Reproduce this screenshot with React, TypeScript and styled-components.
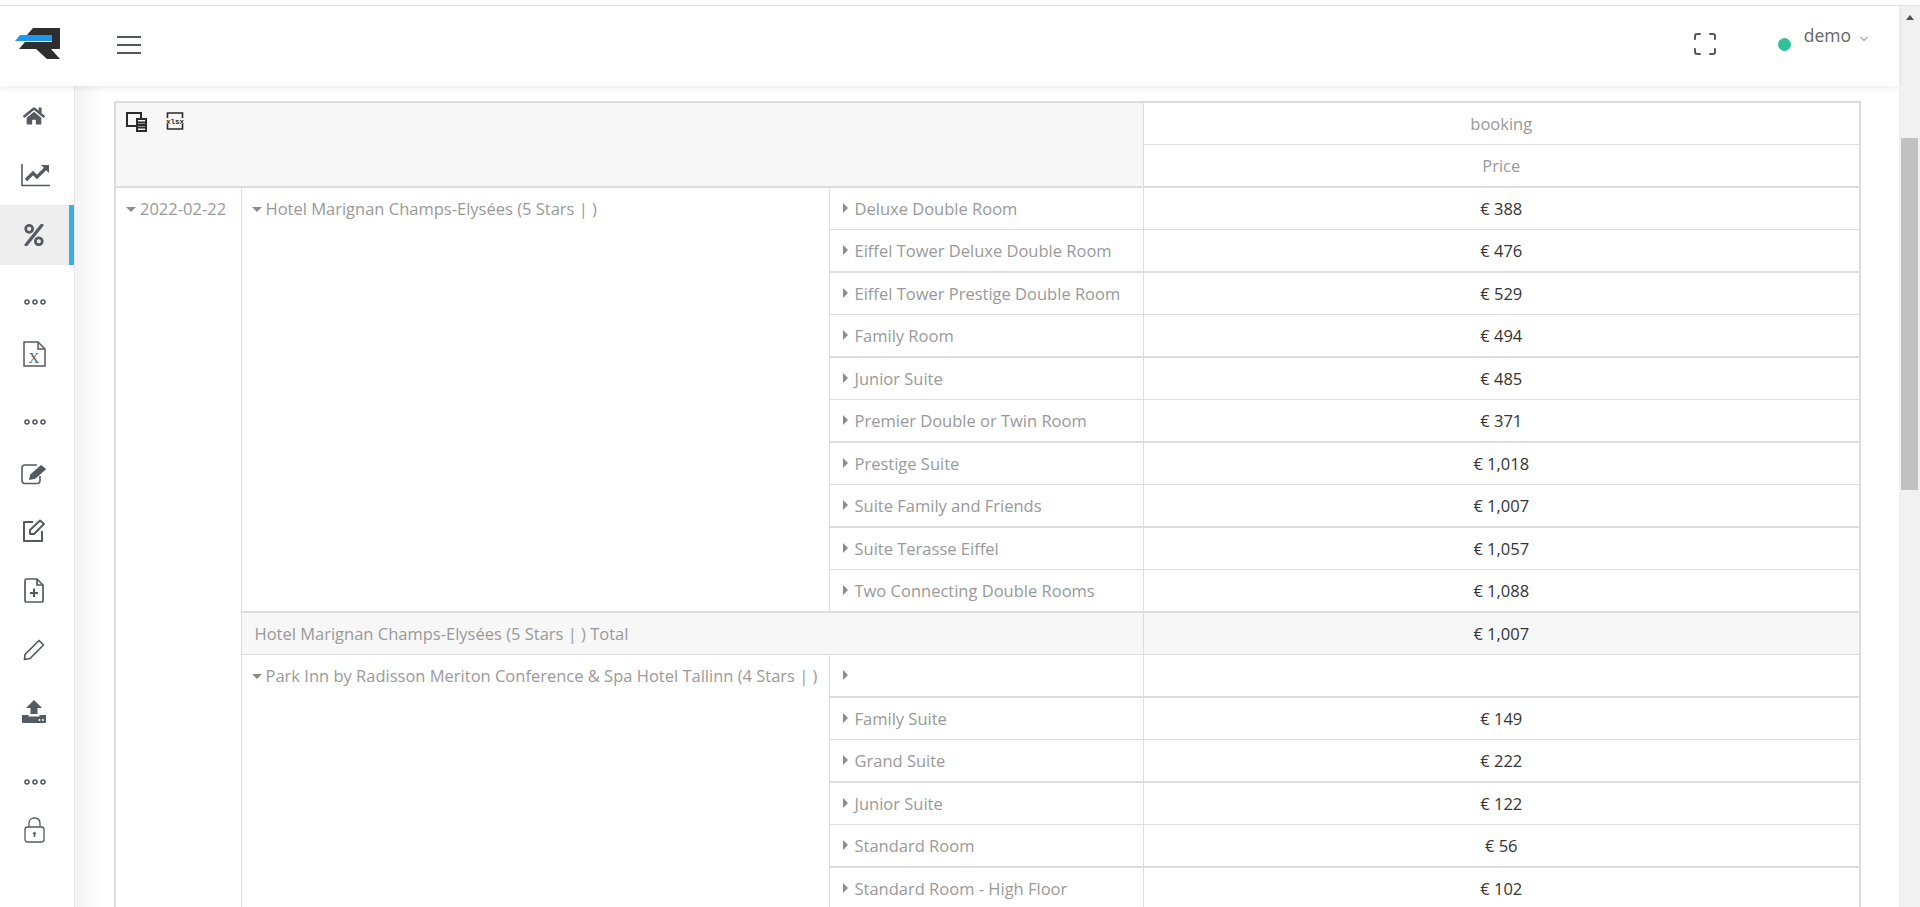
import React from 'react';
import styled, { createGlobalStyle } from 'styled-components';
import { FaHome, FaPercent } from 'react-icons/fa';

const GlobalStyle = createGlobalStyle`
	html, body {
		margin: 0;
		padding: 0;
		height: 100%;
		overflow: hidden;
		background: #fff;
		font-family: 'Open Sans', 'Liberation Sans', sans-serif;
	}
`;

type Row = { room: string; price: string };

const marignan: Row[] = [
	{ room: 'Deluxe Double Room', price: '€ 388' },
	{ room: 'Eiffel Tower Deluxe Double Room', price: '€ 476' },
	{ room: 'Eiffel Tower Prestige Double Room', price: '€ 529' },
	{ room: 'Family Room', price: '€ 494' },
	{ room: 'Junior Suite', price: '€ 485' },
	{ room: 'Premier Double or Twin Room', price: '€ 371' },
	{ room: 'Prestige Suite', price: '€ 1,018' },
	{ room: 'Suite Family and Friends', price: '€ 1,007' },
	{ room: 'Suite Terasse Eiffel', price: '€ 1,057' },
	{ room: 'Two Connecting Double Rooms', price: '€ 1,088' },
];

const parkInn: Row[] = [
	{ room: '', price: '' },
	{ room: 'Family Suite', price: '€ 149' },
	{ room: 'Grand Suite', price: '€ 222' },
	{ room: 'Junior Suite', price: '€ 122' },
	{ room: 'Standard Room', price: '€ 56' },
	{ room: 'Standard Room - High Floor', price: '€ 102' },
];

const Dots = () => (
	<svg width="22" height="6" viewBox="0 0 22 6" fill="none" stroke="#555a60" strokeWidth="1.6">
		<circle cx="3" cy="3" r="2" />
		<circle cx="11" cy="3" r="2" />
		<circle cx="19" cy="3" r="2" />
	</svg>
);

const Logo = () => (
	<svg width="45" height="31" viewBox="0 0 45 31">
		<path d="M18 0H45V21H36L45 31H32L21 21H4L10 14H37V7H12Z" fill="#2e2e2e" />
		<path d="M5 7H37V13H0Z" fill="#1f96f0" />
	</svg>
);

const ChartIcon = () => (
	<svg width="30" height="24" viewBox="0 0 30 24" fill="none">
		<path d="M1 1V22.500H29" stroke="#555a60" strokeWidth="1.6" />
		<path d="M5 17L12 10L16 14L25 5" stroke="#555a60" strokeWidth="3.2" />
		<path d="M20 2H28V10Z" fill="#555a60" />
	</svg>
);

const ExcelIcon = () => (
	<svg width="23" height="26" viewBox="0 0 23 26" fill="none" stroke="#555a60" strokeWidth="1.5">
		<path d="M1 1H15L22 8V25H1Z" />
		<path d="M15 1V8H22" />
		<text x="11" y="22" fontSize="15" fontFamily="Liberation Serif, serif" textAnchor="middle" stroke="none" fill="#555a60">
			X
		</text>
	</svg>
);

const WriteIcon = () => (
	<svg width="26" height="21" viewBox="0 0 26 21" fill="none" stroke="#555a60" strokeWidth="1.6">
		<path d="M16 1H4Q1 1 1 4V16Q1 19.500 4 19.500H16Q19 19.500 19 16V12" />
		<path d="M9 15L10 11L20 2L24 5L14 14Z" fill="#555a60" />
	</svg>
);

const EditIcon = () => (
	<svg width="24" height="24" viewBox="0 0 24 24" fill="none" stroke="#555a60" strokeWidth="2">
		<path d="M11 3H2V22H20V12" strokeLinejoin="round" />
		<path d="M8 15V11L18 1.500L22 5L12 15Z" strokeLinejoin="round" />
	</svg>
);

const NewFileIcon = () => (
	<svg width="20" height="25" viewBox="0 0 20 25" fill="none" stroke="#555a60" strokeWidth="1.7">
		<path d="M2.500 1H13L19 7V23Q19 24 18 24H2.500Q1 24 1 23V2.500Q1 1 2.500 1Z" />
		<path d="M13 1V7H19" />
		<path d="M10 10.500V19M6 15H14" strokeWidth="2" />
	</svg>
);

const PencilIcon = () => (
	<svg width="22" height="22" viewBox="0 0 22 22" fill="none" stroke="#555a60" strokeWidth="1.7">
		<path d="M16 1.500L20.500 6L7 19.500L1.500 20.500L2 15.500Z" strokeLinejoin="round" />
	</svg>
);

const UploadIcon = () => (
	<svg width="24" height="23" viewBox="0 0 24 23">
		<path d="M12 0L20 8H15.500V14H8.500V8H4Z" fill="#555a60" />
		<path d="M0 15H6.500V16.500H17.500V15H24V22Q24 23 23 23H1Q0 23 0 22Z" fill="#555a60" />
		<circle cx="17.500" cy="20" r="1" fill="#fff" />
		<circle cx="21" cy="20" r="1" fill="#fff" />
	</svg>
);

const LockIcon = () => (
	<svg width="21" height="26" viewBox="0 0 21 26" fill="none" stroke="#555a60" strokeWidth="1.3">
		<path d="M5 10V6.500Q5 1 10.500 1T16 6.500V10" />
		<rect x="1" y="10" width="19" height="15" rx="2.500" />
		<path d="M10.500 20V15.500" strokeWidth="1.6" />
		<path d="M8.500 17L10.500 14.500L12.500 17Z" fill="#555a60" stroke="none" />
	</svg>
);

const CopyIcon = () => (
	<svg width="21" height="20" viewBox="0 0 21 20" fill="none" stroke="#2b2b2b" strokeWidth="2">
		<path d="M15 8V1H1V14H11" />
		<rect x="11" y="7" width="9" height="12" fill="#f7f7f7" />
		<path d="M12 10.500H19M12 13H19M12 15.500H19" />
	</svg>
);

const XlsxIcon = () => (
	<svg width="18" height="18" viewBox="0 0 18 18" fill="none">
		<path d="M1.500 6V1H16.500V6M1.500 12V17H16.500V12" stroke="#2b2b2b" strokeWidth="1.6" />
		<text x="0" y="11.500" fontSize="7.500" fontWeight="700" fontFamily="Liberation Mono, monospace" fill="#2b2b2b">
			xlsx
		</text>
	</svg>
);

const FullscreenIcon = () => (
	<svg width="22" height="22" viewBox="0 0 22 22" fill="none" stroke="#54585e" strokeWidth="2" strokeLinecap="round">
		<path d="M1 6V3Q1 1 3 1H6M16 1H19Q21 1 21 3V6M21 16V19Q21 21 19 21H16M6 21H3Q1 21 1 19V16" />
	</svg>
);

const App = () => (
	<Page>
		<GlobalStyle />
		<Main>
			<Header>
				<LogoBox>
					<Logo />
				</LogoBox>
				<MenuButton aria-label="menu">
					<MenuBar />
					<MenuBar />
					<MenuBar />
				</MenuButton>
				<HeaderRight>
					<FullscreenIcon />
					<UserBox>
						<StatusDot />
						<UserName>demo</UserName>
						<Chevron width="8" height="6" viewBox="0 0 8 6" fill="none" stroke="#666" strokeWidth="1">
							<path d="M0.500 1L4 4.500L7.500 1" />
						</Chevron>
					</UserBox>
				</HeaderRight>
			</Header>
			<Body>
				<Sidebar>
					<NavItem $height={59}>
						<FaHome size={22} color="#555a60" />
					</NavItem>
					<NavItem $shift={4}>
						<ChartIcon />
					</NavItem>
					<NavItem $active>
						<FaPercent size={22} color="#555a60" />
					</NavItem>
					<DotsItem $top={27}>
						<Dots />
					</DotsItem>
					<NavItem $top={12}>
						<ExcelIcon />
					</NavItem>
					<DotsItem $top={28}>
						<Dots />
					</DotsItem>
					<NavItem $top={12}>
						<WriteIcon />
					</NavItem>
					<NavItem $top={-3}>
						<EditIcon />
					</NavItem>
					<NavItem $top={-1}>
						<NewFileIcon />
					</NavItem>
					<NavItem>
						<PencilIcon />
					</NavItem>
					<NavItem $top={1}>
						<UploadIcon />
					</NavItem>
					<DotsItem $top={31}>
						<Dots />
					</DotsItem>
					<NavItem $top={8}>
						<LockIcon />
					</NavItem>
				</Sidebar>
				<Content>
					<Pivot>
						<colgroup>
							<col style={{ width: 126 }} />
							<col style={{ width: 588 }} />
							<col style={{ width: 314 }} />
							<col />
						</colgroup>
						<thead>
							<tr>
								<Corner colSpan={3} rowSpan={2}>
									<Tools>
										<CopyIcon />
										<XlsxIcon />
									</Tools>
								</Corner>
								<HeadCell>booking</HeadCell>
							</tr>
							<tr>
								<HeadCell $thick>Price</HeadCell>
							</tr>
						</thead>
						<tbody>
							{marignan.map((r, i) => (
								<tr key={r.room}>
									{i === 0 && (
										<GroupCell rowSpan={marignan.length + 2 + parkInn.length}>
											<CaretDown />
											2022-02-22
										</GroupCell>
									)}
									{i === 0 && (
										<GroupCell rowSpan={marignan.length}>
											<CaretDown />
											Hotel Marignan Champs-Elysées (5 Stars | )
										</GroupCell>
									)}
									<RoomCell $thick={i % 2 === 1}>
										<CaretRight />
										{r.room}
									</RoomCell>
									<PriceCell $thick={i % 2 === 1}>{r.price}</PriceCell>
								</tr>
							))}
							<tr>
								<TotalCell colSpan={2}>Hotel Marignan Champs-Elysées (5 Stars | ) Total</TotalCell>
								<TotalPrice>€ 1,007</TotalPrice>
							</tr>
							{parkInn.map((r, i) => (
								<tr key={r.room}>
									{i === 0 && (
										<GroupCell rowSpan={parkInn.length}>
											<CaretDown />
											Park Inn by Radisson Meriton Conference &amp; Spa Hotel Tallinn (4 Stars | )
										</GroupCell>
									)}
									<RoomCell $thick={i % 2 === 0}>
										<CaretRight />
										{r.room}
									</RoomCell>
									<PriceCell $thick={i % 2 === 0}>{r.price}</PriceCell>
								</tr>
							))}
						</tbody>
					</Pivot>
				</Content>
			</Body>
		</Main>
		<Scrollbar>
			<ScrollArrow />
			<ScrollThumb />
		</Scrollbar>
	</Page>
);

export default App;

const Page = styled.div`
	box-sizing: border-box;
	display: flex;
	height: 907px;
	width: 1920px;
	overflow: hidden;
	margin-top: 5px;
	border-top: 1px solid #e0e0e0;
`;

const Main = styled.div`
	flex: 1;
	min-width: 0;
	display: flex;
	flex-direction: column;
`;

const Header = styled.header`
	position: relative;
	z-index: 2;
	flex: 0 0 80px;
	display: flex;
	align-items: center;
	background: #fff;
	box-shadow: 0 2px 6px rgba(0, 0, 0, 0.08);
`;

const LogoBox = styled.div`
	width: 74px;
	padding-left: 15px;
	box-sizing: border-box;
	display: flex;
	margin-top: -6px;
`;

const MenuButton = styled.button`
	margin-left: 43px;
	margin-top: -3px;
	padding: 0;
	width: 24px;
	border: 0;
	background: none;
	display: flex;
	flex-direction: column;
	gap: 6px;
`;

const MenuBar = styled.span`
	display: block;
	height: 2px;
	background: #54585e;
`;

const HeaderRight = styled.div`
	margin-left: auto;
	display: flex;
	align-items: center;
	padding-right: 31px;
	margin-top: -5px;
`;

const UserBox = styled.div`
	display: flex;
	align-items: center;
	margin-left: 62px;
	color: #666;
`;

const StatusDot = styled.span`
	width: 13px;
	height: 13px;
	border-radius: 50%;
	background: #34bf9b;
	margin-top: 1px;
	margin-right: 13px;
`;

const UserName = styled.span`
	font-size: 17.5px;
	margin-right: 9px;
	margin-top: -17px;
`;

const Chevron = styled.svg`
	margin-top: -10px;
`;

const Body = styled.div`
	flex: 1;
	min-height: 0;
	display: flex;
`;

const Sidebar = styled.nav`
	box-sizing: border-box;
	flex: 0 0 75px;
	border-right: 1px solid #e4e4ea;
	background: #fff;
	display: flex;
	flex-direction: column;
`;

const NavItem = styled.div<{ $active?: boolean; $top?: number; $height?: number; $shift?: number }>`
	flex: none;
	height: ${(p) => p.$height ?? 60}px;
	margin-top: ${(p) => p.$top ?? 0}px;
	display: flex;
	align-items: center;
	justify-content: center;
	padding-left: ${(p) => p.$shift ?? 0}px;
	padding-right: 1px;
	background: ${(p) => (p.$active ? '#eeeeee' : 'transparent')};
	border-right: ${(p) => (p.$active ? '5px solid #3bb0dc' : '5px solid transparent')};
`;

const DotsItem = styled(NavItem)`
	height: 20px;
	padding-right: 0;
`;

const Content = styled.main`
	flex: 1;
	min-width: 0;
	overflow: hidden;
	padding: 15px 38px 0 39px;
	background: linear-gradient(90deg, #f3f3f5 0, #fff 30px);
`;

const Pivot = styled.table`
	width: 100%;
	table-layout: fixed;
	border-collapse: collapse;
	border: 2px solid #dcdcdc;
	background: #fff;
	font-size: 16.5px;
	color: #999;
`;

const Cell = styled.td<{ $thick?: boolean }>`
	border: 1px solid #dddddd;
	border-bottom-width: ${(p) => (p.$thick ? 2 : 1)}px;
	box-sizing: border-box;
	height: 42.5px;
	padding: 0;
	white-space: nowrap;
`;

const Corner = styled(Cell).attrs({ as: 'th' })`
	background: #f7f7f7;
	vertical-align: top;
	text-align: left;
	border-bottom-width: 2px;
`;

const Tools = styled.div`
	display: flex;
	gap: 19px;
	padding: 9px 0 0 10px;
`;

const HeadCell = styled(Cell).attrs({ as: 'th' })`
	font-weight: 400;
	text-align: center;
`;

const GroupCell = styled(Cell)`
	vertical-align: top;
	padding: 9px 10px 0 10px;
`;

const RoomCell = styled(Cell)`
	padding-left: 13px;
`;

const PriceCell = styled(Cell)`
	text-align: center;
	color: #333;
`;

const TotalCell = styled(Cell)`
	background: #f7f7f7;
	padding-left: 13px;
	border-top-width: 2px;
`;

const TotalPrice = styled(TotalCell)`
	text-align: center;
	padding-left: 0;
	color: #333;
`;

const CaretDown = styled.i`
	display: inline-block;
	width: 0;
	height: 0;
	margin: 0 4px 3px 0;
	border-style: solid;
	border-width: 5px 5px 0;
	border-color: #8c8c8c transparent transparent;
`;

const CaretRight = styled.i`
	display: inline-block;
	width: 0;
	height: 0;
	margin-right: 7px;
	margin-bottom: 2px;
	border-style: solid;
	border-width: 5px 0 5px 5px;
	border-color: transparent transparent transparent #8c8c8c;
`;

const Scrollbar = styled.div`
	flex: 0 0 21px;
	background: #f1f1f1;
	display: flex;
	flex-direction: column;
	align-items: center;
`;

const ScrollArrow = styled.i`
	margin-top: 9px;
	border-style: solid;
	border-width: 0 4.500px 5px;
	border-color: transparent transparent #505050;
`;

const ScrollThumb = styled.div`
	width: 17px;
	height: 352px;
	margin-top: 118px;
	background: #c1c1c1;
`;
